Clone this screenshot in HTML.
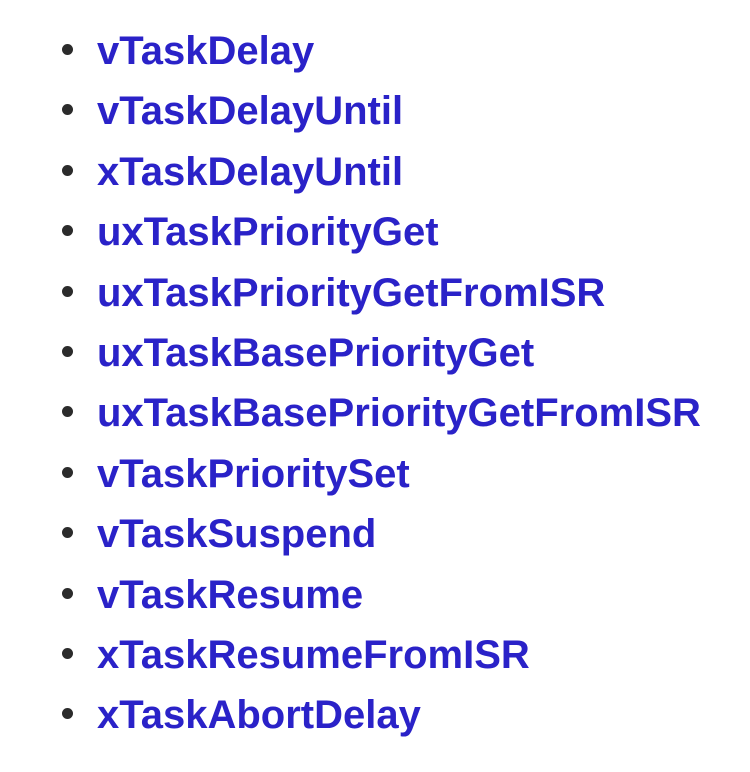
<!DOCTYPE html>
<html><head><style>
body{margin:0;background:#fff;width:750px;height:772px;overflow:hidden}
ul{position:absolute;left:0;top:29px;margin:0;padding:0;list-style:none}
li{position:relative;height:60.4px;line-height:60.4px;padding-left:97px;font:bold 40px "Liberation Sans",Arial,sans-serif;color:#2a22c8;white-space:nowrap}
li:before{content:"";position:absolute;left:62px;top:15px;width:11px;height:11px;border-radius:50%;background:#2b2b2b}
</style></head><body>
<ul>
<li>vTaskDelay</li>
<li>vTaskDelayUntil</li>
<li>xTaskDelayUntil</li>
<li>uxTaskPriorityGet</li>
<li>uxTaskPriorityGetFromISR</li>
<li>uxTaskBasePriorityGet</li>
<li>uxTaskBasePriorityGetFromISR</li>
<li>vTaskPrioritySet</li>
<li>vTaskSuspend</li>
<li>vTaskResume</li>
<li>xTaskResumeFromISR</li>
<li>xTaskAbortDelay</li>
</ul>
</body></html>
